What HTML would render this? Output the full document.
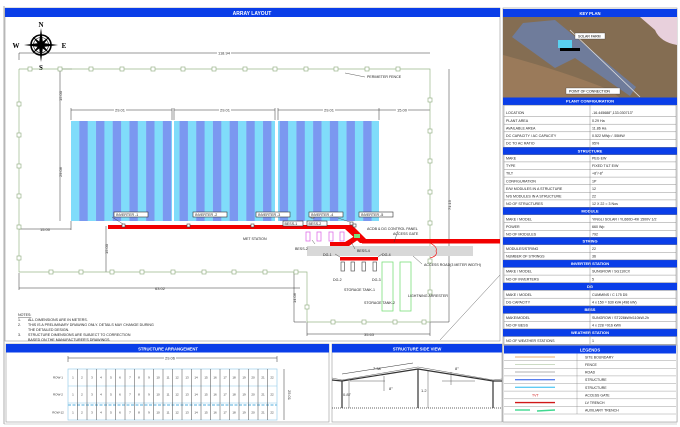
<!DOCTYPE html>
<html><head><meta charset="utf-8"><style>
html,body{margin:0;padding:0;background:#fff;width:680px;height:427px;overflow:hidden}
svg{display:block;font-family:"Liberation Sans",sans-serif}
</style></head><body>
<svg width="680" height="427" viewBox="0 0 680 427" xmlns="http://www.w3.org/2000/svg">
<defs>
<pattern id="st" x="71" y="0" width="16.7" height="10" patternUnits="userSpaceOnUse">
<rect x="0" y="0" width="8.3" height="10" fill="#80dcfa"/><rect x="8.3" y="0" width="8.4" height="10" fill="#7b98f0"/>
</pattern>
</defs>
<rect width="680" height="427" fill="#fff"/>
<!-- outer frames -->
<line x1="4" y1="6" x2="4" y2="424" stroke="#999" stroke-width="0.8"/>
<rect x="5" y="8" width="495" height="333" fill="none" stroke="#999" stroke-width="0.6"/>
<rect x="5" y="8" width="495" height="9" fill="#0a3ee8"/>
<text x="252" y="15" font-size="5" font-weight="bold" fill="#fff" text-anchor="middle">ARRAY LAYOUT</text>

<!-- compass -->
<g transform="translate(41,45)">
<circle r="10" fill="none" stroke="#000" stroke-width="1.6"/>
<circle r="7.5" fill="none" stroke="#000" stroke-width="0.6"/>
<polygon points="0,-17 2,-2 0,0 -2,-2" fill="#000"/><polygon points="0,17 2,2 0,0 -2,2" fill="#000"/>
<polygon points="-17,0 -2,2 0,0 -2,-2" fill="#000"/><polygon points="17,0 2,2 0,0 2,-2" fill="#000"/>
<g transform="rotate(45)"><polygon points="0,-12 1.5,-2 0,0 -1.5,-2" fill="#000"/><polygon points="0,12 1.5,2 0,0 -1.5,2" fill="#000"/><polygon points="-12,0 -2,1.5 0,0 -2,-1.5" fill="#000"/><polygon points="12,0 2,1.5 0,0 2,-1.5" fill="#000"/></g>
</g>
<g font-family="Liberation Serif,serif" font-size="7" font-weight="bold" text-anchor="middle">
<text x="41" y="27">N</text><text x="16" y="48">W</text><text x="64" y="48">E</text><text x="41" y="70">S</text></g>

<!-- dimension lines -->
<g stroke="#333" stroke-width="0.5" fill="none">
<line x1="19" y1="53" x2="430" y2="53"/><line x1="19" y1="53" x2="19" y2="60"/>
<line x1="60" y1="69" x2="60" y2="121"/><line x1="60" y1="69" x2="72" y2="69"/>
<line x1="60" y1="121" x2="60" y2="221"/>
<line x1="71" y1="110" x2="172" y2="110"/><line x1="174" y1="110" x2="275" y2="110"/><line x1="278" y1="110" x2="379" y2="110"/><line x1="379" y1="110" x2="430" y2="110"/>
<line x1="71" y1="108" x2="71" y2="120"/><line x1="172" y1="108" x2="172" y2="120"/><line x1="174" y1="108" x2="174" y2="120"/><line x1="275" y1="108" x2="275" y2="120"/><line x1="278" y1="108" x2="278" y2="120"/><line x1="379" y1="108" x2="379" y2="120"/>
<line x1="19" y1="229" x2="71" y2="229"/><line x1="71" y1="221" x2="71" y2="230"/>
<line x1="106" y1="226" x2="106" y2="272"/>
<line x1="19" y1="288" x2="300" y2="288"/><line x1="19" y1="273" x2="19" y2="290"/>
<line x1="294" y1="272" x2="294" y2="322"/><line x1="294" y1="322" x2="306" y2="322"/>
<line x1="307" y1="334" x2="430" y2="334"/><line x1="307" y1="322" x2="307" y2="336"/><line x1="430" y1="322" x2="430" y2="336"/>
<line x1="449" y1="69" x2="449" y2="322"/><line x1="430" y1="322" x2="449" y2="322"/>
<line x1="500" y1="275" x2="440" y2="340" stroke="#666"/>
</g>
<g font-size="4" fill="#333" text-anchor="middle">
<rect x="217" y="50.5" width="14" height="5" fill="#fff"/><text x="224" y="54.5">118.94</text>
<rect x="114" y="107.5" width="12" height="5" fill="#fff"/><text x="120" y="111.5">29.01</text>
<rect x="219" y="107.5" width="12" height="5" fill="#fff"/><text x="225" y="111.5">29.01</text>
<rect x="323" y="107.5" width="12" height="5" fill="#fff"/><text x="329" y="111.5">29.01</text>
<rect x="396" y="107.5" width="12" height="5" fill="#fff"/><text x="402" y="111.5">15.00</text>
<text x="45" y="231">15.00</text>
<text x="160" y="290">63.02</text>
<text x="369" y="336">35.63</text>
<text transform="translate(62,96) rotate(-90)">15.00</text>
<text transform="translate(62,172) rotate(-90)">29.06</text>
<text transform="translate(108,249) rotate(-90)">15.00</text>
<text transform="translate(296,298) rotate(-90)">14.06</text>
<text transform="translate(451,205) rotate(-90)">71.15</text>
</g>

<!-- fence -->
<g stroke="#9ab88a" stroke-width="0.7" fill="none">
<polyline points="19,69 430,69 430,322 307,322 307,272 19,272 19,69"/>
</g>
<g stroke="#8aa87a" stroke-width="0.6" fill="#fff">
<rect x="28" y="67" width="4" height="4"/><rect x="58" y="67" width="4" height="4"/><rect x="89" y="67" width="4" height="4"/><rect x="120" y="67" width="4" height="4"/><rect x="151" y="67" width="4" height="4"/><rect x="181" y="67" width="4" height="4"/><rect x="212" y="67" width="4" height="4"/><rect x="243" y="67" width="4" height="4"/><rect x="273" y="67" width="4" height="4"/><rect x="304" y="67" width="4" height="4"/><rect x="334" y="67" width="4" height="4"/><rect x="365" y="67" width="4" height="4"/><rect x="396" y="67" width="4" height="4"/>
<rect x="17" y="102" width="4" height="4"/><rect x="17" y="133" width="4" height="4"/><rect x="17" y="164" width="4" height="4"/><rect x="17" y="194" width="4" height="4"/><rect x="17" y="225" width="4" height="4"/><rect x="17" y="256" width="4" height="4"/>
<rect x="49" y="270" width="4" height="4"/><rect x="79" y="270" width="4" height="4"/><rect x="110" y="270" width="4" height="4"/><rect x="140" y="270" width="4" height="4"/><rect x="171" y="270" width="4" height="4"/><rect x="202" y="270" width="4" height="4"/><rect x="232" y="270" width="4" height="4"/><rect x="263" y="270" width="4" height="4"/><rect x="294" y="270" width="4" height="4"/>
<rect x="305" y="305" width="4" height="4"/>
<rect x="331" y="320" width="4" height="4"/><rect x="362" y="320" width="4" height="4"/><rect x="393" y="320" width="4" height="4"/><rect x="422" y="320" width="4" height="4"/>
<rect x="428" y="98" width="4" height="4"/><rect x="428" y="129" width="4" height="4"/><rect x="428" y="159" width="4" height="4"/><rect x="428" y="190" width="4" height="4"/><rect x="428" y="221" width="4" height="4"/><rect x="428" y="259" width="4" height="4"/><rect x="428" y="290" width="4" height="4"/>
</g>

<!-- arrays -->
<rect x="71" y="121" width="101" height="100" fill="url(#st)"/>
<rect x="174" y="121" width="101" height="100" fill="url(#st)" style="transform:translateX(0)"/>
<rect x="278" y="121" width="101" height="100" fill="url(#st)"/>

<!-- road -->
<rect x="307" y="246" width="166" height="10" fill="#d8d8d8"/>
<!-- red trench -->
<g fill="#f20000">
<rect x="108" y="225" width="237" height="4"/>
<polygon points="345,225 352,225 366,239 366,243 360,243 345,229"/>
<polygon points="330,242 345,242 358,234 362,237 349,246 330,246"/>
<rect x="362" y="239" width="138" height="4.5"/>
<rect x="340" y="257" width="38" height="3.5"/>
</g>
<!-- BESS -->
<g stroke="#e070e8" stroke-width="0.8" fill="#fff">
<rect x="306" y="232" width="4" height="9"/><rect x="317" y="232" width="4" height="9"/><rect x="329" y="232" width="4" height="9"/><rect x="340" y="232" width="4" height="9"/>
</g>
<!-- DG -->
<g stroke="#444" stroke-width="0.6" fill="#fff">
<rect x="341" y="262" width="3.5" height="9"/><rect x="351" y="262" width="3.5" height="9"/><rect x="362" y="262" width="3.5" height="9"/><rect x="373" y="262" width="3.5" height="9"/>
<rect x="350" y="222" width="3" height="3"/><rect x="311" y="215" width="3" height="3"/><rect x="251" y="224" width="3" height="3"/><rect x="187" y="224" width="3" height="3"/><rect x="122" y="224" width="3" height="3"/><rect x="353" y="224" width="3" height="3"/>
</g>
<rect x="354" y="234" width="6" height="4" fill="#7ce07c"/>
<!-- tanks -->
<g stroke="#7ce07c" stroke-width="0.8" fill="none">
<rect x="382" y="262" width="11" height="49"/><rect x="400" y="262" width="11" height="49"/>
</g>
<path d="M430 243 Q438 247 436 251 Q438 256 430 258" stroke="#f20000" stroke-width="0.6" fill="none"/>

<!-- labels -->
<g font-size="3.6" fill="#222">
<g stroke="#333" stroke-width="0.6" fill="#fff"><rect x="114" y="212" width="34" height="5"/><rect x="193" y="212" width="34" height="5"/><rect x="256" y="212" width="34" height="5"/><rect x="309" y="212" width="34" height="5"/><rect x="359" y="212" width="34" height="5"/><rect x="283" y="221" width="20" height="5"/><rect x="307" y="221" width="20" height="5"/></g>
<text x="116" y="216">INVERTER -1</text><text x="195" y="216">INVERTER -2</text><text x="258" y="216">INVERTER -3</text><text x="311" y="216">INVERTER -4</text><text x="361" y="216">INVERTER -5</text>
<text x="284.5" y="225">BESS-1</text><text x="308.5" y="225">BESS-2</text>
<text x="243" y="240">MET STATION</text><text x="295" y="250">BESS-2</text><text x="357" y="252">BESS-4</text>
<text x="367" y="230">ACDB &amp; DG CONTROL PANEL</text><text x="393" y="235">ACCESS GATE</text>
<text x="424" y="266">ACCESS ROAD(3 METER WIDTH)</text>
<text x="323" y="256">DG-1</text><text x="382" y="256">DG-4</text><text x="333" y="281">DG-2</text><text x="372" y="281">DG-3</text>
<text x="344" y="291">STORAGE TANK-1</text><text x="364" y="304">STORAGE TANK-2</text><text x="408" y="297">LIGHTNING ARRESTER</text>
<text x="367" y="78">PERIMETER FENCE</text>
</g>
<g stroke="#333" stroke-width="0.4" fill="none">
<path d="M123 224 L112 217"/><path d="M350 222 L338 218"/><path d="M315 244 L312 240"/><path d="M355 249 L351 242"/><path d="M398 231 L394 242"/><path d="M422 264 L413 256"/><path d="M365 77 L345 73"/><path d="M340 257 L335 254"/><path d="M378 257 L382 254"/>
</g>

<!-- notes -->
<g font-size="3.6" fill="#222">
<text x="18" y="316" text-decoration="underline">NOTES:</text>
<text x="18" y="321">1.</text><text x="28" y="321">ALL DIMENSIONS ARE IN METERS.</text>
<text x="18" y="326">2.</text><text x="28" y="326">THIS IS A PRELIMINARY DRAWING ONLY. DETAILS MAY CHANGE DURING</text>
<text x="28" y="331">THE DETAILED DESIGN.</text>
<text x="18" y="336">3.</text><text x="28" y="336">STRUCTURE DIMENSIONS ARE SUBJECT TO CORRECTION</text>
<text x="28" y="341">BASED ON THE MANUFACTURER'S DRAWINGS.</text>
</g>

<!-- structure arrangement -->
<rect x="6" y="344" width="323" height="78" fill="#fff" stroke="#999" stroke-width="0.6"/>
<rect x="6" y="344" width="323" height="8.5" fill="#0a3ee8"/>
<text x="168" y="350.5" font-size="4.2" font-weight="bold" fill="#fff" text-anchor="middle">STRUCTURE ARRANGEMENT</text>
<g stroke="#333" stroke-width="0.5"><line x1="68" y1="358" x2="277" y2="358"/><line x1="68" y1="356" x2="68" y2="362"/><line x1="277" y1="356" x2="277" y2="362"/><line x1="284" y1="369" x2="284" y2="420"/></g>
<rect x="164" y="355.5" width="12" height="5" fill="#fff"/><text x="170" y="359.5" font-size="4" text-anchor="middle" fill="#333">29.06</text>
<text transform="translate(288,395) rotate(90)" font-size="4" text-anchor="middle" fill="#333">25.01</text>
<g id="grid">
<rect x="68" y="369" width="209" height="51" fill="#fff" stroke="#8cc8e8" stroke-width="0.6"/>
<line x1="68" y1="386" x2="277" y2="386" stroke="#8cc8e8" stroke-width="0.6"/>
<line x1="68" y1="403" x2="277" y2="403" stroke="#8cc8e8" stroke-width="0.6"/>
<line x1="68" y1="405" x2="277" y2="405" stroke="#8cc8e8" stroke-width="1.4" stroke-dasharray="3,1.5"/>
</g>
<g stroke="#333" stroke-width="0.45">
<line x1="77.5" y1="369" x2="77.5" y2="420"/><line x1="87" y1="369" x2="87" y2="420"/><line x1="96.5" y1="369" x2="96.5" y2="420"/><line x1="106" y1="369" x2="106" y2="420"/><line x1="115.5" y1="369" x2="115.5" y2="420"/><line x1="125" y1="369" x2="125" y2="420"/><line x1="134.5" y1="369" x2="134.5" y2="420"/><line x1="144" y1="369" x2="144" y2="420"/><line x1="153.5" y1="369" x2="153.5" y2="420"/><line x1="163" y1="369" x2="163" y2="420"/><line x1="172.5" y1="369" x2="172.5" y2="420"/><line x1="182" y1="369" x2="182" y2="420"/><line x1="191.5" y1="369" x2="191.5" y2="420"/><line x1="201" y1="369" x2="201" y2="420"/><line x1="210.5" y1="369" x2="210.5" y2="420"/><line x1="220" y1="369" x2="220" y2="420"/><line x1="229.5" y1="369" x2="229.5" y2="420"/><line x1="239" y1="369" x2="239" y2="420"/><line x1="248.5" y1="369" x2="248.5" y2="420"/><line x1="258" y1="369" x2="258" y2="420"/><line x1="267.5" y1="369" x2="267.5" y2="420"/>
</g>
<g font-size="3" fill="#333" text-anchor="middle">
<text x="58" y="378.5">ROW-1</text><text x="58" y="395.5">ROW-2</text><text x="58" y="413.5">ROW-12</text>
<text x="73" y="378.5">1</text><text x="82" y="378.5">2</text><text x="92" y="378.5">3</text><text x="101" y="378.5">4</text><text x="111" y="378.5">5</text><text x="120" y="378.5">6</text><text x="130" y="378.5">7</text><text x="139" y="378.5">8</text><text x="149" y="378.5">9</text><text x="158" y="378.5">10</text><text x="168" y="378.5">11</text><text x="177" y="378.5">12</text><text x="187" y="378.5">13</text><text x="196" y="378.5">14</text><text x="206" y="378.5">15</text><text x="215" y="378.5">16</text><text x="225" y="378.5">17</text><text x="234" y="378.5">18</text><text x="244" y="378.5">19</text><text x="253" y="378.5">20</text><text x="263" y="378.5">21</text><text x="272" y="378.5">22</text>
<text x="73" y="395.5">1</text><text x="82" y="395.5">2</text><text x="92" y="395.5">3</text><text x="101" y="395.5">4</text><text x="111" y="395.5">5</text><text x="120" y="395.5">6</text><text x="130" y="395.5">7</text><text x="139" y="395.5">8</text><text x="149" y="395.5">9</text><text x="158" y="395.5">10</text><text x="168" y="395.5">11</text><text x="177" y="395.5">12</text><text x="187" y="395.5">13</text><text x="196" y="395.5">14</text><text x="206" y="395.5">15</text><text x="215" y="395.5">16</text><text x="225" y="395.5">17</text><text x="234" y="395.5">18</text><text x="244" y="395.5">19</text><text x="253" y="395.5">20</text><text x="263" y="395.5">21</text><text x="272" y="395.5">22</text>
<text x="73" y="413.5">1</text><text x="82" y="413.5">2</text><text x="92" y="413.5">3</text><text x="101" y="413.5">4</text><text x="111" y="413.5">5</text><text x="120" y="413.5">6</text><text x="130" y="413.5">7</text><text x="139" y="413.5">8</text><text x="149" y="413.5">9</text><text x="158" y="413.5">10</text><text x="168" y="413.5">11</text><text x="177" y="413.5">12</text><text x="187" y="413.5">13</text><text x="196" y="413.5">14</text><text x="206" y="413.5">15</text><text x="215" y="413.5">16</text><text x="225" y="413.5">17</text><text x="234" y="413.5">18</text><text x="244" y="413.5">19</text><text x="253" y="413.5">20</text><text x="263" y="413.5">21</text><text x="272" y="413.5">22</text>
</g>

<!-- side view -->
<rect x="332" y="344" width="170" height="78" fill="#fff" stroke="#999" stroke-width="0.6"/>
<rect x="332" y="344" width="170" height="8.5" fill="#0a3ee8"/>
<text x="417" y="350.5" font-size="4.2" font-weight="bold" fill="#fff" text-anchor="middle">STRUCTURE SIDE VIEW</text>
<g stroke="#333" fill="none">
<polyline points="332,380 342,381 418,369 493,381 502,381" stroke-width="1.2"/>
<polyline points="332,378 342,380 418,367 493,380 502,379" stroke-width="0.4"/>
<line x1="332" y1="408" x2="502" y2="408" stroke-width="0.7" stroke-dasharray="1,1"/>
<line x1="342" y1="381" x2="342" y2="408" stroke-width="1.2"/><line x1="418" y1="369" x2="418" y2="408" stroke-width="1.2"/><line x1="493" y1="381" x2="493" y2="408" stroke-width="1.2"/>
<line x1="349" y1="381" x2="349" y2="408" stroke-width="0.4"/><line x1="428" y1="371" x2="428" y2="408" stroke-width="0.4"/>
<line x1="342" y1="374" x2="413" y2="363" stroke-width="0.5"/>
<line x1="350" y1="381" x2="385" y2="381" stroke-width="0.4"/><line x1="442" y1="381" x2="475" y2="381" stroke-width="0.4"/>
<line x1="384" y1="376" x2="384" y2="391" stroke-width="0.4"/><line x1="451" y1="372" x2="451" y2="385" stroke-width="0.4"/>
</g>
<g font-size="4" fill="#333">
<text x="373" y="370">7.38</text><text x="343" y="396">0.87</text><text x="421" y="392">1.2</text><text x="389" y="390">8°</text><text x="455" y="370">8°</text>
</g>

<!-- KEY PLAN -->
<rect x="503" y="8" width="174" height="414" fill="none" stroke="#999" stroke-width="0.6"/>
<rect x="503" y="9" width="174" height="8" fill="#0a3ee8"/>
<text x="590" y="15" font-size="4.2" font-weight="bold" fill="#fff" text-anchor="middle">KEY PLAN</text>
<rect x="503" y="17" width="174" height="81" fill="#8a6a4e"/>
<rect x="503" y="17" width="174" height="81" fill="#7e6f55" opacity="0.5"/>
<path d="M640 17 L677 17 L677 45 Q660 42 655 30 Z" fill="#e8d0dc"/>
<path d="M503 55 Q560 70 610 90 L620 98 L503 98 Z" fill="#9a7a5a"/>
<polygon points="523,23 555,20 636,87 630,96 575,58 555,68 512,37" fill="#6b7fa8" opacity="0.85"/>
<line x1="570" y1="30" x2="640" y2="97" stroke="#ddd" stroke-width="0.8"/>
<rect x="558" y="40" width="14" height="8" fill="#5ad0f0"/><rect x="560" y="48" width="20" height="3" fill="#000"/>
<rect x="575" y="33" width="30" height="6" fill="#fff" stroke="#333" stroke-width="0.3"/><text x="578" y="37.5" font-size="3.5">SOLAR FARM</text>
<rect x="566" y="88" width="54" height="6" fill="#fff" stroke="#333" stroke-width="0.3"/><text x="569" y="92.5" font-size="3.5">POINT OF CONNECTION</text>

<!-- config table -->
<g font-size="3.6" fill="#222">
<g fill="#0a3ee8">
<rect x="503" y="97.5" width="174" height="7.6"/><rect x="503" y="147.2" width="174" height="7.6"/><rect x="503" y="207.2" width="174" height="7.6"/><rect x="503" y="237.2" width="174" height="7.6"/><rect x="503" y="259.9" width="174" height="7.6"/><rect x="503" y="282.7" width="174" height="7.6"/><rect x="503" y="305.9" width="174" height="7.6"/><rect x="503" y="328.9" width="174" height="7.6"/>
</g>
<g font-weight="bold" fill="#fff" text-anchor="middle" font-size="4">
<text x="590" y="102.6">PLANT CONFIGURATION</text><text x="590" y="152.3">STRUCTURE</text><text x="590" y="212.3">MODULE</text><text x="590" y="242.3">STRING</text><text x="590" y="265">INVERTER STATION</text><text x="590" y="287.8">DG</text><text x="590" y="311">BESS</text><text x="590" y="334">WEATHER STATION</text>
</g>
<g stroke="#777" stroke-width="0.4" fill="none">
<rect x="504" y="105.1" width="172" height="42.1"/><rect x="504" y="154.8" width="172" height="52.4"/><rect x="504" y="214.8" width="172" height="22.4"/><rect x="504" y="244.8" width="172" height="15.1"/><rect x="504" y="267.5" width="172" height="15.2"/><rect x="504" y="290.3" width="172" height="15.6"/><rect x="504" y="313.5" width="172" height="15.4"/><rect x="504" y="336.5" width="172" height="7.8"/>
<line x1="590" y1="105" x2="590" y2="344"/>
<path d="M504 116.6H676M504 124.2H676M504 131.8H676M504 139.5H676M504 161.9H676M504 169.5H676M504 177.1H676M504 184.7H676M504 192.3H676M504 199.9H676M504 222.7H676M504 230.3H676M504 252.3H676M504 275.1H676M504 298.2H676M504 321.3H676"/>
</g>
<text x="506" y="114.2">LOCATION</text><text x="592" y="114.2">-16.445688°,133.030713°</text>
<text x="506" y="121.8">PLANT AREA</text><text x="592" y="121.8">0.29 Ha</text>
<text x="506" y="129.4">AVAILABLE AREA</text><text x="592" y="129.4">11.86 Ha</text>
<text x="506" y="137">DC CAPACITY / AC CAPACITY</text><text x="592" y="137">0.522 MWp / .55MW</text>
<text x="506" y="144.6">DC TO AC RATIO</text><text x="592" y="144.6">95%</text>
<text x="506" y="159.5">MAKE</text><text x="592" y="159.5">PEG EW</text>
<text x="506" y="167.1">TYPE</text><text x="592" y="167.1">FIXED TILT E/W</text>
<text x="506" y="174.7">TILT</text><text x="592" y="174.7">+8°/-8°</text>
<text x="506" y="182.3">CONFIGURATION</text><text x="592" y="182.3">1P</text>
<text x="506" y="189.9">E/W MODULES IN A STRUCTURE</text><text x="592" y="189.9">12</text>
<text x="506" y="197.5">N/S MODULES IN A STRUCTURE</text><text x="592" y="197.5">22</text>
<text x="506" y="205.1">NO OF STRUCTURES</text><text x="592" y="205.1">12 X 22 = 3 Nos</text>
<text x="506" y="220.3">MAKE / MODEL</text><text x="592" y="220.3">YINGLI SOLAR / YL660D-49I 1500V 1/2</text>
<text x="506" y="227.9">POWER</text><text x="592" y="227.9">660 Wp</text>
<text x="506" y="235.5">NO OF MODULES</text><text x="592" y="235.5">792</text>
<text x="506" y="250">MODULES/STRING</text><text x="592" y="250">22</text>
<text x="506" y="257.6">NUMBER OF STRINGS</text><text x="592" y="257.6">36</text>
<text x="506" y="272.7">MAKE / MODEL</text><text x="592" y="272.7">SUNGROW / SG110CX</text>
<text x="506" y="280.3">NO OF INVERTERS</text><text x="592" y="280.3">5</text>
<text x="506" y="295.8">MAKE / MODEL</text><text x="592" y="295.8">CUMMINS / C 175 D5</text>
<text x="506" y="303.4">DG CAPACITY</text><text x="592" y="303.4">4 x 150 = 630 kVA (496 kW)</text>
<text x="506" y="318.9">MAKE/MODEL</text><text x="592" y="318.9">SUNGROW / ST228kWh/110kW-2h</text>
<text x="506" y="326.5">NO OF BESS</text><text x="592" y="326.5">4 x 228 =916 kWh</text>
<text x="506" y="341.9">NO OF WEATHER STATIONS</text><text x="592" y="341.9">1</text>
</g>

<!-- legends -->
<rect x="503" y="345" width="174" height="77" fill="#fff" stroke="#999" stroke-width="0.6"/>
<rect x="504" y="345.5" width="172" height="8" fill="#0a3ee8"/>
<text x="590" y="351.5" font-size="4.2" font-weight="bold" fill="#fff" text-anchor="middle">LEGENDS</text>
<g stroke="#888" stroke-width="0.4" fill="none">
<path d="M504 360.7H676M504 368.3H676M504 375.9H676M504 383.5H676M504 391.1H676M504 398.8H676M504 406.4H676M504 414H676"/>
<line x1="577" y1="353.5" x2="577" y2="414"/>
</g>
<g stroke-width="1.4">
<line x1="515" y1="357" x2="555" y2="357" stroke="#f0c8a0"/>
<line x1="515" y1="364.5" x2="555" y2="364.5" stroke="#9ab88a" stroke-width="0.6"/>
<line x1="515" y1="372" x2="555" y2="372" stroke="#d8d8d8" stroke-width="2"/>
<line x1="515" y1="379.7" x2="555" y2="379.7" stroke="#5a80ee"/>
<line x1="515" y1="387.3" x2="555" y2="387.3" stroke="#60ccf4"/>
<line x1="515" y1="402.6" x2="555" y2="402.6" stroke="#d01818"/>
<line x1="515" y1="410" x2="530" y2="410" stroke="#40d890"/><line x1="537" y1="411" x2="555" y2="410" stroke="#40d890"/>
</g>
<text x="532" y="396.3" font-size="3.5" fill="#d01818">TVT</text>
<g font-size="3.5" fill="#222">
<text x="585" y="358.3">SITE BOUNDARY</text><text x="585" y="366">FENCE</text><text x="585" y="373.6">ROAD</text><text x="585" y="381.2">STRUCTURE</text><text x="585" y="388.8">STRUCTURE</text><text x="585" y="396.4">ACCESS GATE</text><text x="585" y="404">LV TRENCH</text><text x="585" y="411.6">AUXILIARY TRENCH</text>
</g>
<!-- title strip -->
<line x1="4" y1="424" x2="677" y2="424" stroke="#aaa" stroke-width="0.6"/>
</svg>
</body></html>
